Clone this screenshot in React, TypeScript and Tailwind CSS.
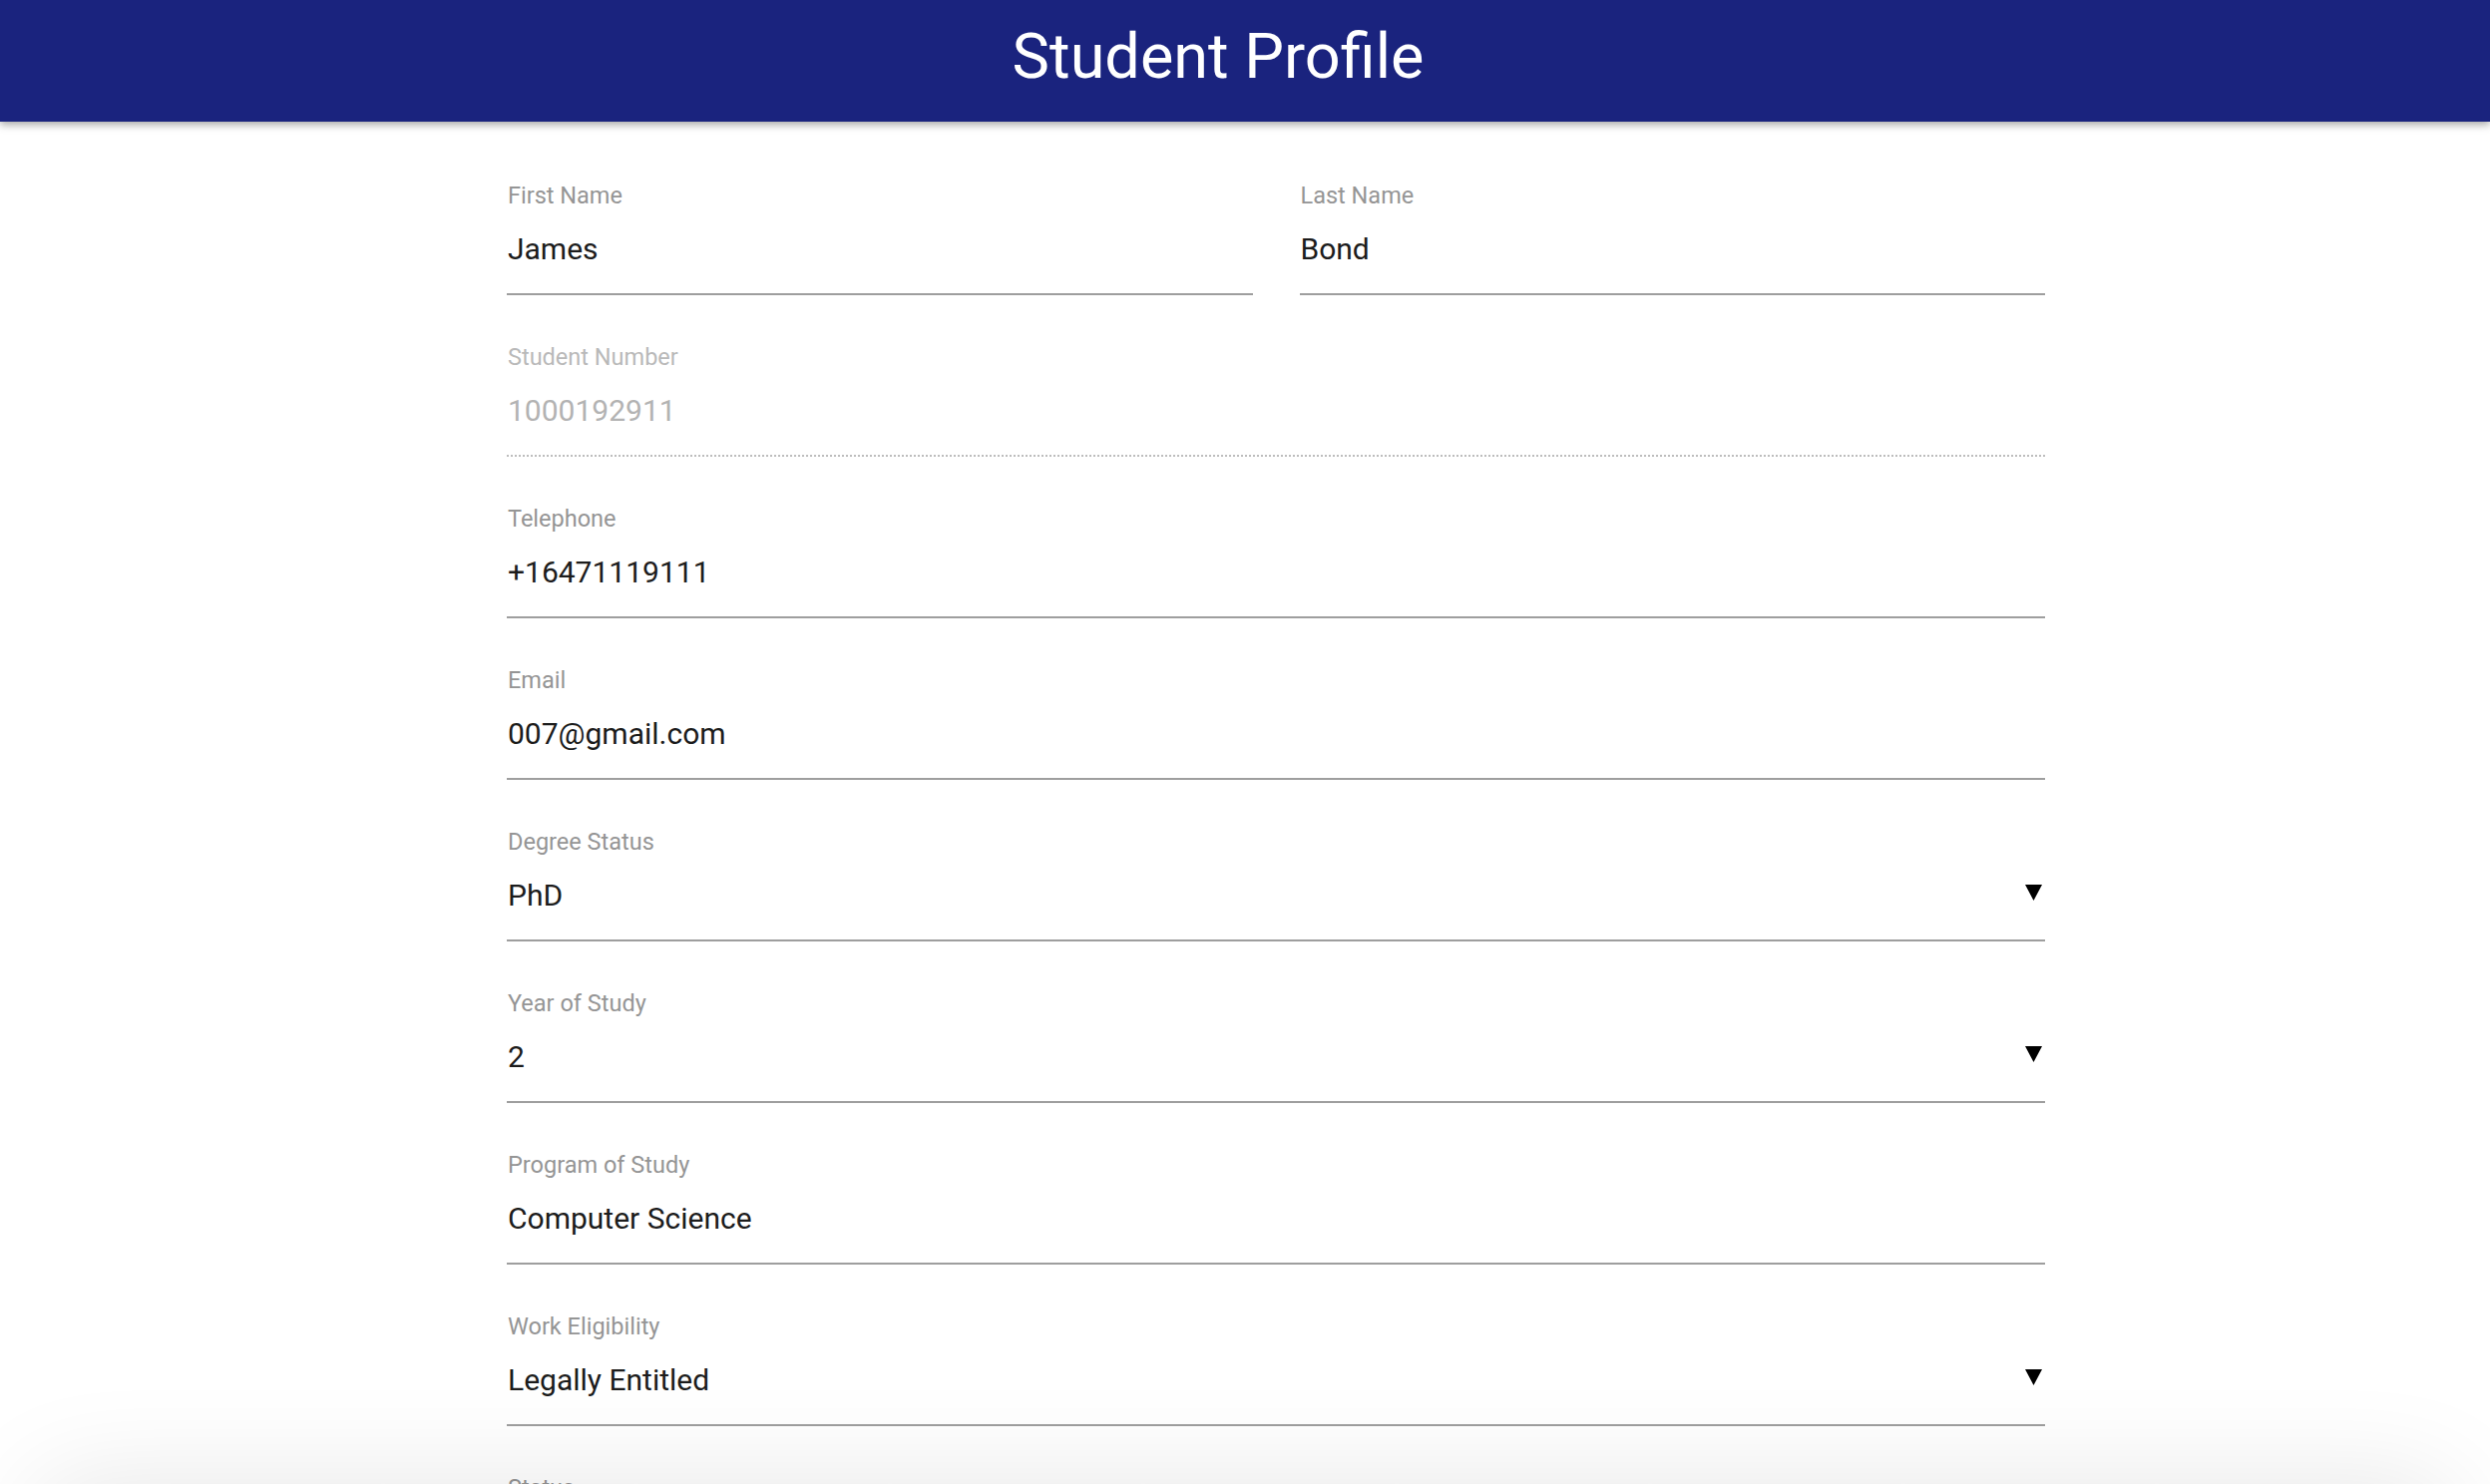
import React from 'react';

type Field = {
  label: string;
  value: string;
  select?: boolean;
  disabled?: boolean;
};

const fields: Field[] = [
  { label: 'Student Number', value: '1000192911', disabled: true },
  { label: 'Telephone', value: '+16471119111' },
  { label: 'Email', value: '007@gmail.com' },
  { label: 'Degree Status', value: 'PhD', select: true },
  { label: 'Year of Study', value: '2', select: true },
  { label: 'Program of Study', value: 'Computer Science' },
  { label: 'Work Eligibility', value: 'Legally Entitled', select: true },
  { label: 'Status', value: 'Active', select: true },
];

const Arrow: React.FC = () => (
  <svg width="17" height="16" viewBox="0 0 17 16" className="absolute right-[3px] top-[4px]">
    <polygon points="0,0 17,0 8.5,16" fill="#000" />
  </svg>
);

const TextField: React.FC<Field> = ({ label, value, select, disabled }) => (
  <div className="pt-[50px]">
    <div
      className={`h-[24px] pl-px text-[23.5px] leading-[24px] ${disabled ? 'text-[#b9b9b9]' : 'text-[#959595]'}`}
    >
      {label}
    </div>
    <div
      className={`relative mt-[27px] h-[30px] pl-px text-[30px] leading-[30px] ${
        disabled ? 'text-[#b3b3b3]' : 'text-[#1c1c1c]'
      }`}
    >
      {value}
      {select && <Arrow />}
    </div>
    <div
      className={`mt-[29px] border-b-2 ${
        disabled ? 'border-dotted border-[#bdbdbd]' : 'border-solid border-[#9e9e9e]'
      }`}
    />
  </div>
);

const App: React.FC = () => {
  return (
    <div className="min-h-screen bg-white font-['Roboto',sans-serif]">
      <header className="relative z-10 h-[122px] bg-[#1a237e] shadow-[0_3px_8px_rgba(0,0,0,0.35)]">
        <h1 className="pt-[25px] pr-[54px] text-center text-[63px] leading-[63px] font-normal text-white">
          Student Profile
        </h1>
      </header>

      <main className="ml-[508px] w-[1542px] pt-[12px] pb-16">
        <div className="grid grid-cols-2 gap-x-[47px]">
          <TextField label="First Name" value="James" />
          <TextField label="Last Name" value="Bond" />
        </div>
        {fields.map((f) => (
          <TextField key={f.label} {...f} />
        ))}
      </main>

      <div className="fixed left-[70px] right-[70px] top-full mt-[30px] h-[200px] bg-white shadow-[0_0_110px_30px_rgba(0,0,0,0.1)] z-20" />
    </div>
  );
};

export default App;
